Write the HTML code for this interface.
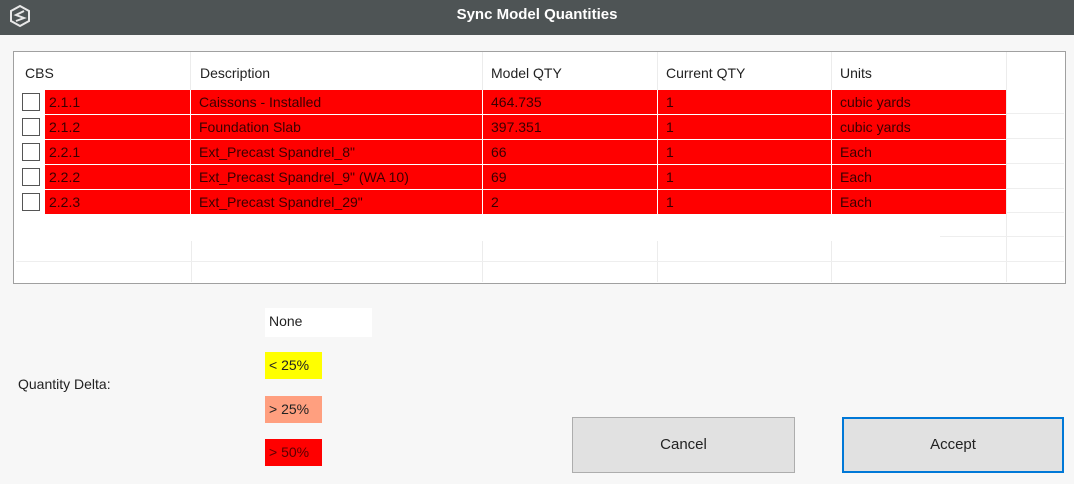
<!DOCTYPE html>
<html><head><style>
body{margin:0;width:1074px;height:484px;background:#f7f7f7;font-family:"Liberation Sans","DejaVu Sans",sans-serif;position:relative;overflow:hidden;color:#111}
.a{position:absolute}
.title{left:0;top:0;width:1074px;height:35px;background:#4e5455;color:#fff;font-weight:bold;font-size:15px;text-align:center;line-height:30px}
.box{left:13px;top:51px;width:1051px;height:231px;border:1px solid #a0a0a0;background:#fff}
.vl{width:1px;background:#ececec}
.hl{height:1px;background:#eeeeee}
.h{font-size:14px;color:#222;top:65px}
.cell{background:#ff0000;height:24px;font-size:14px;color:#3a0000;line-height:25px;padding-left:8px;box-sizing:border-box}
.cb{width:16px;height:16px;border:1px solid #555;background:#fff}
.lg{font-size:14px;color:#222;line-height:27px;padding-left:4px;box-sizing:border-box}
.btn{background:#e1e1e1;border:1px solid #adadad;font-size:15px;text-align:center;color:#222;box-sizing:border-box}
</style></head><body>
<div class="a title">Sync Model Quantities</div>
<svg class="a" style="left:8px;top:4px" width="24" height="24" viewBox="0 0 24 24" fill="none" stroke="#e8e8e8" stroke-width="2"><path d="M12 2 L21 7 L21 17 L12 22 L3 17 L3 7 Z"/><path d="M16 7 L8 11 L16 14 L8 17"/></svg>
<div class="a box"></div>
<div class="a vl" style="left:190px;top:52px;height:38px"></div>
<div class="a vl" style="left:482px;top:52px;height:38px"></div>
<div class="a vl" style="left:657px;top:52px;height:38px"></div>
<div class="a vl" style="left:831px;top:52px;height:38px"></div>
<div class="a vl" style="left:1006px;top:52px;height:230px"></div>
<div class="a vl" style="left:191px;top:241px;height:41px"></div>
<div class="a vl" style="left:482px;top:241px;height:41px"></div>
<div class="a vl" style="left:657px;top:241px;height:41px"></div>
<div class="a vl" style="left:831px;top:241px;height:41px"></div>
<div class="a hl" style="left:16px;top:261px;width:1048px"></div>
<div class="a hl" style="left:940px;top:236px;width:124px"></div>
<div class="a hl" style="left:1006px;top:113px;width:58px"></div>
<div class="a hl" style="left:1006px;top:138px;width:58px"></div>
<div class="a hl" style="left:1006px;top:163px;width:58px"></div>
<div class="a hl" style="left:1006px;top:188px;width:58px"></div>
<div class="a hl" style="left:1006px;top:212px;width:58px"></div>
<div class="a h" style="left:25px">CBS</div>
<div class="a h" style="left:200px">Description</div>
<div class="a h" style="left:491px">Model QTY</div>
<div class="a h" style="left:666px">Current QTY</div>
<div class="a h" style="left:840px">Units</div>

<div class="a" style="left:0;top:90px">
<div class="a cb" style="left:22px;top:3px"></div>
<div class="a cell" style="left:45px;width:145px;padding-left:4px">2.1.1</div>
<div class="a cell" style="left:191px;width:291px">Caissons - Installed</div>
<div class="a cell" style="left:483px;width:174px">464.735</div>
<div class="a cell" style="left:658px;width:173px">1</div>
<div class="a cell" style="left:832px;width:174px">cubic yards</div>
</div>
<div class="a" style="left:0;top:115px">
<div class="a cb" style="left:22px;top:3px"></div>
<div class="a cell" style="left:45px;width:145px;padding-left:4px">2.1.2</div>
<div class="a cell" style="left:191px;width:291px">Foundation Slab</div>
<div class="a cell" style="left:483px;width:174px">397.351</div>
<div class="a cell" style="left:658px;width:173px">1</div>
<div class="a cell" style="left:832px;width:174px">cubic yards</div>
</div>
<div class="a" style="left:0;top:140px">
<div class="a cb" style="left:22px;top:3px"></div>
<div class="a cell" style="left:45px;width:145px;padding-left:4px">2.2.1</div>
<div class="a cell" style="left:191px;width:291px">Ext_Precast Spandrel_8"</div>
<div class="a cell" style="left:483px;width:174px">66</div>
<div class="a cell" style="left:658px;width:173px">1</div>
<div class="a cell" style="left:832px;width:174px">Each</div>
</div>
<div class="a" style="left:0;top:165px">
<div class="a cb" style="left:22px;top:3px"></div>
<div class="a cell" style="left:45px;width:145px;padding-left:4px">2.2.2</div>
<div class="a cell" style="left:191px;width:291px">Ext_Precast Spandrel_9" (WA 10)</div>
<div class="a cell" style="left:483px;width:174px">69</div>
<div class="a cell" style="left:658px;width:173px">1</div>
<div class="a cell" style="left:832px;width:174px">Each</div>
</div>
<div class="a" style="left:0;top:190px">
<div class="a cb" style="left:22px;top:3px"></div>
<div class="a cell" style="left:45px;width:145px;padding-left:4px">2.2.3</div>
<div class="a cell" style="left:191px;width:291px">Ext_Precast Spandrel_29"</div>
<div class="a cell" style="left:483px;width:174px">2</div>
<div class="a cell" style="left:658px;width:173px">1</div>
<div class="a cell" style="left:832px;width:174px">Each</div>
</div>

<div class="a lg" style="left:265px;top:308px;width:107px;height:29px;background:#fff">None</div>
<div class="a lg" style="left:265px;top:352px;width:57px;height:27px;background:#ffff00">&lt; 25%</div>
<div class="a lg" style="left:265px;top:396px;width:57px;height:27px;background:#ff9f7f">&gt; 25%</div>
<div class="a lg" style="left:265px;top:439px;width:57px;height:27px;background:#ff0000;color:#5a0000">&gt; 50%</div>
<div class="a" style="left:18px;top:376px;font-size:14px;color:#222">Quantity Delta:</div>

<div class="a btn" style="left:572px;top:417px;width:223px;height:56px;line-height:54px">Cancel</div>
<div class="a btn" style="left:842px;top:417px;width:222px;height:56px;line-height:52px;border:2px solid #0078d7">Accept</div>
</body></html>
